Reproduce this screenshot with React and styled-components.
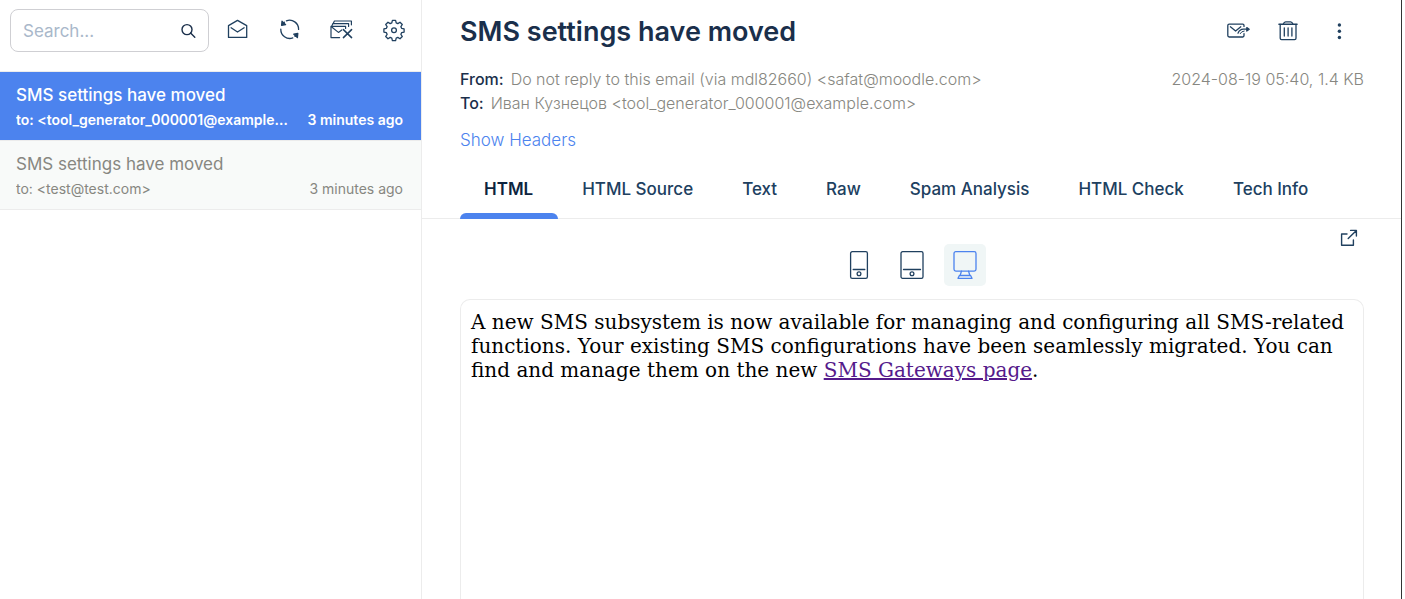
import React from "react";
import styled, { createGlobalStyle } from "styled-components";

const color = {
  ink: "#20405f",
  heading: "#1a2f4b",
  muted: "#878781",
  blue: "#4c83ee",
  line: "#ececec",
};

const GlobalStyle = createGlobalStyle`
  * { box-sizing: border-box; }
  body {
    margin: 0;
    background: #fff;
    color: ${color.heading};
    font-family: Inter, "Liberation Sans", sans-serif;
    font-size: 17px;
    font-weight: 300;
    overflow: hidden;
  }
  button { font: inherit; border: 0; background: none; padding: 0; cursor: pointer; color: ${color.ink}; }
  h1, h2, p, dl, dd, ul { margin: 0; padding: 0; }
`;

const Shell = styled.div`
  display: grid;
  grid-template-columns: 422px minmax(0, 1fr);
  height: 100vh;
  margin-right: 3px;
  border-right: 1px solid #333;
`;

const Sidebar = styled.aside`
  border-right: 1px solid ${color.line};
  min-width: 0;
`;

const Toolbar = styled.div`
  display: flex;
  align-items: flex-start;
  gap: 2px;
  height: 72px;
  padding: 9px 0 0 10px;
  border-bottom: 1px solid ${color.line};
`;

const ToolGroup = styled.div`
  display: flex;
`;

const SearchBox = styled.label`
  display: flex;
  align-items: center;
  width: 199px;
  height: 43px;
  padding: 0 12px;
  border: 1px solid #cfcfd3;
  border-radius: 8px;
`;

const SearchInput = styled.input`
  flex: 1;
  min-width: 0;
  padding: 0;
  border: 0;
  outline: 0;
  background: none;
  font: inherit;
  font-weight: 400;
  color: ${color.heading};
  &::placeholder { color: #a9b8ca; opacity: 1; }
`;

const ToolButton = styled.button`
  display: flex;
  align-items: center;
  justify-content: center;
  width: 52px;
  height: 40px;
`;

const MessageList = styled.ul`
  list-style: none;
`;

const Message = styled.li`
  height: 69px;
  padding: 10px 18px 0 16px;
  border-bottom: 1px solid ${color.line};
  background: ${(p) => (p.$selected ? color.blue : "#f8faf9")};
  color: ${(p) => (p.$selected ? "#fff" : color.muted)};
  font-weight: ${(p) => (p.$selected ? 500 : 400)};
`;

const MessageTitle = styled.p`
  line-height: 26px;
`;

const MessageMeta = styled.p`
  display: flex;
  justify-content: space-between;
  gap: 16px;
  font-size: 14px;
  font-weight: ${(p) => (p.$selected ? 600 : 400)};
  line-height: 24px;
  white-space: nowrap;
`;

const Recipient = styled.span`
  overflow: hidden;
  text-overflow: ellipsis;
`;

const Main = styled.main`
  display: flex;
  flex-direction: column;
  min-width: 0;
`;

const Header = styled.header`
  padding: 0 37px 0 38px;
`;

const TitleRow = styled.div`
  display: flex;
  align-items: center;
  justify-content: space-between;
  height: 62px;
`;

const Title = styled.h1`
  padding-top: 2px;
  font-size: 27px;
  line-height: 34px;
  font-weight: 600;
`;

const Actions = styled.div`
  display: flex;
`;

const ActionButton = styled(ToolButton)`
  width: 51px;
`;

const Details = styled.div`
  display: flex;
  justify-content: space-between;
  padding-top: 5px;
  font-size: 16px;
  line-height: 24px;
  color: ${color.muted};
`;

const Addresses = styled.dl``;

const Address = styled.div`
  display: flex;
  gap: 7px;
  dt { color: ${color.heading}; font-weight: 500; }
`;

const HeadersButton = styled.button`
  display: block;
  margin-top: 12px;
  line-height: 26px;
  color: ${color.blue};
`;

const Tabs = styled.div`
  display: flex;
  margin-top: 7px;
  padding: 0 38px;
  border-bottom: 1px solid ${color.line};
`;

const Tab = styled.button`
  position: relative;
  height: 58px;
  padding: 0 25px 0 24px;
  font-weight: ${(p) => (p.$active ? 600 : 500)};
  color: ${(p) => (p.$active ? "#0d2440" : color.ink)};
  white-space: nowrap;
  &::after {
    content: "";
    display: ${(p) => (p.$active ? "block" : "none")};
    position: absolute;
    left: 0;
    right: 0;
    bottom: -1px;
    height: 6px;
    border-radius: 6px 6px 0 0;
    background: ${color.blue};
  }
`;

const ViewBar = styled.div`
  display: grid;
  grid-template-columns: 1fr auto 1fr;
  padding: 0 38px;
`;

const Devices = styled.div`
  grid-column: 2;
  display: flex;
  gap: 11px;
  padding: 25px 0 13px;
`;

const DeviceButton = styled.button`
  display: flex;
  align-items: center;
  justify-content: center;
  width: 42px;
  height: 42px;
  border-radius: 5px;
  color: ${(p) => (p.$active ? color.blue : color.ink)};
  background: ${(p) => (p.$active ? "#f0f6f6" : "none")};
`;

const OpenLink = styled.a`
  justify-self: end;
  align-self: start;
  display: flex;
  padding: 10px 5px;
  color: ${color.ink};
`;

const Preview = styled.article`
  flex: 1;
  margin: 0 37px 0 38px;
  padding: 10px;
  border: 1px solid ${color.line};
  border-bottom: 0;
  border-radius: 10px 10px 0 0;
  font-family: "DejaVu Serif", serif;
  font-size: 20px;
  font-weight: 400;
  line-height: 24px;
  color: #000;
  a { color: #551a8b; }
`;

const Glyph = ({ w = 24, h = 24, sw = 1.3, children }) => (
  <svg
    width={w}
    height={h}
    viewBox={`0 0 ${w} ${h}`}
    fill="none"
    stroke="currentColor"
    strokeWidth={sw}
    strokeLinecap="round"
    strokeLinejoin="round"
    overflow="visible"
    aria-hidden="true"
  >
    {children}
  </svg>
);

const SearchIcon = () => (
  <Glyph w={16} h={16} sw={1.4}>
    <circle cx="7" cy="6.6" r="5" />
    <path d="M10.6 10.1 L14.8 14.2" />
  </Glyph>
);

const OpenMailIcon = () => (
  <Glyph>
    <path d="M3.5 8.6 L12.5 3.4 L21.7 8.6 V20.4 H3.5 Z" />
    <path d="M6.1 10.8 L12.5 15 L19.1 10.8" />
  </Glyph>
);

const RefreshIcon = () => (
  <Glyph>
    <path d="M9.4 3.8 A9 9 0 0 1 21.6 12.4" />
    <path d="M15.8 20.9 A9 9 0 0 1 3.8 12.2" />
    <path d="M5.8 6.8 A9 9 0 0 1 7.4 5.2" />
    <path d="M19.4 18 A9 9 0 0 1 18 19.4" />
    <path d="M5 4.2 L4.6 8.4 L8.6 7.6 Z" fill="currentColor" />
    <path d="M20.4 20.6 L20.8 16.4 L16.8 17.2 Z" fill="currentColor" />
  </Glyph>
);

const ClearMailIcon = () => (
  <Glyph sw={1.2}>
    <path d="M10.6 20.6 H2 V9.4 H16.6 V11.4" />
    <path d="M2.4 9.8 L9.4 15.4 L12.8 13" />
    <path d="M2.8 9 L4 6.6 H19.6 V9.4" />
    <path d="M4.2 6.4 L5.4 4 H22.4 V7.8" />
    <path d="M14.4 12.6 L22.6 20.6 M22.6 12.6 L14.4 20.6" strokeWidth="1.5" />
  </Glyph>
);

const GearIcon = () => (
  <Glyph>
    <g transform="translate(1 0.8)">
      <path d="M10.4 2.6 h3.2 l.6 2.5 1.6.7 2.2-1.4 2.3 2.3 -1.4 2.2 .7 1.6 2.5.6 v3.2 l-2.5.6 -.7 1.6 1.4 2.2 -2.3 2.3 -2.2-1.4 -1.6.7 -.6 2.5 h-3.2 l-.6-2.5 -1.6-.7 -2.2 1.4 -2.3-2.3 1.4-2.2 -.7-1.6 -2.5-.6 v-3.2 l2.5-.6 .7-1.6 -1.4-2.2 2.3-2.3 2.2 1.4 1.6-.7 Z" />
      <circle cx="12" cy="12.4" r="2.4" />
    </g>
  </Glyph>
);

const ForwardIcon = () => (
  <Glyph>
    <path d="M19 7.4 V6.4 Q19 5.2 17.8 5.2 H4.2 Q2.8 5.2 2.8 6.6 V16.6 Q2.8 18 4.2 18 H17.8 Q19 18 19 16.6 V14.6" />
    <path d="M5.4 7.8 L10.6 12 L15.8 7.8" />
    <path d="M13 14.2 Q14.6 10.4 18.4 10.2 H21.4" />
    <path d="M15.2 14.6 Q16.4 12.2 19.2 12" strokeWidth="1" />
    <path d="M21.8 8.6 L24.2 10.3 L21.8 12 Z" fill="currentColor" />
  </Glyph>
);

const TrashIcon = () => (
  <Glyph>
    <path d="M3 5.2 H21" strokeWidth="1.6" />
    <path d="M7.4 4.9 Q8 2.8 9.6 2.8 H14.6 Q16.2 2.8 16.8 4.9" />
    <path d="M4.2 5.4 V19.2 Q4.2 20.6 5.6 20.6 H18.6 Q20 20.6 20 19.2 V5.4" />
    <path d="M8.3 8.8 V17 M12.1 8.8 V17 M15.9 8.8 V17" />
  </Glyph>
);

const MoreIcon = () => (
  <Glyph>
    <g fill="currentColor" stroke="none">
      <circle cx="12.4" cy="6" r="1.7" />
      <circle cx="12.4" cy="12.3" r="1.7" />
      <circle cx="12.4" cy="18.5" r="1.7" />
    </g>
  </Glyph>
);

const PhoneIcon = () => (
  <Glyph w={28} h={28}>
    <rect x="5.6" y=".7" width="16.8" height="26.6" rx="1.6" />
    <path d="M8.2 18.5 H19.8" />
    <circle cx="14" cy="22.8" r="1.9" />
  </Glyph>
);

const TabletIcon = () => (
  <Glyph w={28} h={28}>
    <rect x="3" y=".7" width="22" height="26.6" rx="1.6" />
    <path d="M5.5 18.5 H22.5" />
    <circle cx="14" cy="22.8" r="1.9" />
  </Glyph>
);

const DesktopIcon = () => (
  <Glyph w={28} h={28}>
    <rect x="3" y=".7" width="22" height="19.4" rx="1.8" />
    <path d="M10.4 20.2 L9.2 24.4 M17.6 20.2 L18.8 24.4" />
    <path d="M8.4 24.5 H19.6 L21 27.3 H7 Z" />
  </Glyph>
);

const ExternalIcon = () => (
  <Glyph w={18} h={18} sw={1.4}>
    <path d="M7 5 H1.6 V16.3 H13.4 V11" />
    <path d="M8.2 9.6 L16.4 1.4 M10.6 1.4 H16.4 V7" />
  </Glyph>
);

const messages = [
  { title: "SMS settings have moved", to: "to: <tool_generator_000001@example.com>", age: "3 minutes ago", selected: true },
  { title: "SMS settings have moved", to: "to: <test@test.com>", age: "3 minutes ago" },
];

const tools = [
  ["Mark all as read", OpenMailIcon],
  ["Refresh", RefreshIcon],
  ["Clear mailbox", ClearMailIcon],
  ["Settings", GearIcon],
];

const actions = [
  ["Relay message", ForwardIcon],
  ["Delete message", TrashIcon],
  ["More actions", MoreIcon],
];

const tabs = ["HTML", "HTML Source", "Text", "Raw", "Spam Analysis", "HTML Check", "Tech Info"];

const devices = [
  ["Phone", PhoneIcon],
  ["Tablet", TabletIcon],
  ["Desktop", DesktopIcon],
];

export default function App() {
  return (
    <Shell>
      <GlobalStyle />
      <Sidebar>
        <Toolbar>
          <SearchBox>
            <SearchInput type="text" placeholder="Search..." aria-label="Search" />
            <SearchIcon />
          </SearchBox>
          <ToolGroup>
            {tools.map(([label, Icon]) => (
              <ToolButton key={label} type="button" aria-label={label}>
                <Icon />
              </ToolButton>
            ))}
          </ToolGroup>
        </Toolbar>
        <MessageList>
          {messages.map((m) => (
            <Message key={m.to} $selected={m.selected}>
              <MessageTitle>{m.title}</MessageTitle>
              <MessageMeta $selected={m.selected}>
                <Recipient>{m.to}</Recipient>
                <span>{m.age}</span>
              </MessageMeta>
            </Message>
          ))}
        </MessageList>
      </Sidebar>
      <Main>
        <Header>
          <TitleRow>
            <Title>SMS settings have moved</Title>
            <Actions>
              {actions.map(([label, Icon]) => (
                <ActionButton key={label} type="button" aria-label={label}>
                  <Icon />
                </ActionButton>
              ))}
            </Actions>
          </TitleRow>
          <Details>
            <Addresses>
              <Address>
                <dt>From:</dt>
                <dd>Do not reply to this email (via mdl82660) &lt;safat@moodle.com&gt;</dd>
              </Address>
              <Address>
                <dt>To:</dt>
                <dd>Иван Кузнецов &lt;tool_generator_000001@example.com&gt;</dd>
              </Address>
            </Addresses>
            <span>2024-08-19 05:40, 1.4 KB</span>
          </Details>
          <HeadersButton type="button">Show Headers</HeadersButton>
        </Header>
        <Tabs role="tablist">
          {tabs.map((name, i) => (
            <Tab key={name} type="button" role="tab" aria-selected={i === 0} $active={i === 0}>
              {name}
            </Tab>
          ))}
        </Tabs>
        <ViewBar>
          <Devices>
            {devices.map(([label, Icon], i) => (
              <DeviceButton key={label} type="button" aria-label={label} $active={i === 2}>
                <Icon />
              </DeviceButton>
            ))}
          </Devices>
          <OpenLink href="#preview" aria-label="Open in new window">
            <ExternalIcon />
          </OpenLink>
        </ViewBar>
        <Preview id="preview">
          A new SMS subsystem is now available for managing and configuring all SMS-related functions. Your existing SMS
          configurations have been seamlessly migrated. You can find and manage them on the new{" "}
          <a href="#gateways">SMS Gateways page</a>.
        </Preview>
      </Main>
    </Shell>
  );
}
